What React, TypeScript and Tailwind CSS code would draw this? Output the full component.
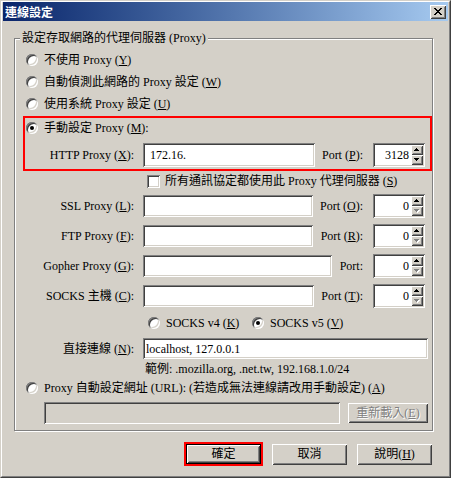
import React from "react";

const sunken =
  "shadow-[inset_1px_1px_0_#808080,inset_-1px_-1px_0_#ffffff,inset_2px_2px_0_#404040,inset_-2px_-2px_0_#d4d0c8]";
const raised =
  "shadow-[inset_1px_1px_0_#ffffff,inset_-1px_-1px_0_#404040,inset_2px_2px_0_#d4d0c8,inset_-2px_-2px_0_#808080]";

const Key = ({ k }: { k: string }) => (
  <span>
    (<u className="underline-offset-[1px]">{k}</u>)
  </span>
);

const Radio = ({ on }: { on?: boolean }) => (
  <span
    className={`w-[12px] h-[12px] shrink-0 rounded-full bg-white flex items-center justify-center ${sunken}`}
  >
    {on && <span className="w-[4px] h-[4px] rounded-full bg-black" />}
  </span>
);

// tiny pixel triangle for spin buttons
const Arrow = ({ up, off }: { up?: boolean; off?: boolean }) => {
  const rows = up
    ? [
        [2, 1],
        [1, 3],
        [0, 5],
      ]
    : [
        [0, 5],
        [1, 3],
        [2, 1],
      ];
  return (
    <svg width="6" height="4" shapeRendering="crispEdges">
      {off &&
        rows.map(([x, w], i) => (
          <rect key={"s" + i} x={x + 1} y={i + 1} width={w} height={1} fill="#ffffff" />
        ))}
      {rows.map(([x, w], i) => (
        <rect key={i} x={x} y={i} width={w} height={1} fill={off ? "#808080" : "#000000"} />
      ))}
    </svg>
  );
};

const Spin = ({ value, downOff }: { value: string; downOff?: boolean }) => (
  <div className={`w-[52px] h-[24px] bg-white flex items-stretch p-[2px] ${sunken}`}>
    <span className="flex-1 flex items-center justify-end pr-[2px]">{value}</span>
    <div className="w-[12px] flex flex-col">
      <div className={`h-[10px] bg-[#d4d0c8] flex items-center justify-center ${raised}`}>
        <Arrow up />
      </div>
      <div className={`h-[10px] bg-[#d4d0c8] flex items-center justify-center ${raised}`}>
        <Arrow off={downOff} />
      </div>
    </div>
  </div>
);

const Field = ({
  label,
  inputW,
  port,
}: {
  label: React.ReactNode;
  inputW: string;
  port: React.ReactNode;
}) => (
  <div className="flex items-center h-[24px] w-[410px]">
    <span className="w-[119px] text-right">{label}</span>
    <div className={`ml-[9px] h-[22px] bg-white ${inputW} ${sunken}`} />
    <span className="flex-1 text-right pr-[10px]">{port}</span>
    <Spin value="0" downOff />
  </div>
);

const CloseX = () => {
  const px = [
    [0, 0, 2], [6, 0, 2],
    [1, 1, 2], [5, 1, 2],
    [2, 2, 4],
    [3, 3, 2],
    [2, 4, 4],
    [1, 5, 2], [5, 5, 2],
    [0, 6, 2], [6, 6, 2],
  ];
  return (
    <svg width="8" height="7" shapeRendering="crispEdges">
      {px.map(([x, y, w], i) => (
        <rect key={i} x={x} y={y} width={w} height={1} fill="#000" />
      ))}
    </svg>
  );
};

export default function App() {
  return (
    <div className="w-[451px] h-[478px] bg-[#d4d0c8] border border-t-[#d4d0c8] border-l-[#d4d0c8] border-r-[#404040] border-b-[#404040] text-black text-[12px] leading-[14px] font-[family-name:'Liberation_Serif','Noto_Sans_CJK_TC',serif]">
      <div className="h-full border border-t-white border-l-white border-r-[#808080] border-b-[#808080] px-[1px] pb-[1px] flex flex-col">
        {/* title bar */}
        <div className="h-[19px] bg-linear-to-r from-[#0a246a] to-[#a6caf0] flex items-center justify-between pl-[2px] pr-[2px]">
          <span className="text-white font-bold text-[12px] font-[family-name:'Noto_Sans_CJK_TC',sans-serif]">
            連線設定
          </span>
          <button className={`w-[16px] h-[14px] bg-[#d4d0c8] flex items-center justify-center ${raised}`}>
            <CloseX />
          </button>
        </div>

        {/* group box */}
        <div className="relative ml-[11px] mt-[17px] w-[419px] h-[393px] border border-[#808080] shadow-[inset_1px_1px_0_#ffffff,1px_1px_0_#ffffff] pt-[10px] flex flex-col">
          <span className="absolute -top-[8px] left-[5px] px-[2px] bg-[#d4d0c8]">
            設定存取網路的代理伺服器 (Proxy)
          </span>

          <div className="flex items-center gap-[6px] h-[22px] pl-[11px]">
            <Radio />
            <span>
              不使用 Proxy <Key k="Y" />
            </span>
          </div>
          <div className="flex items-center gap-[6px] h-[22px] pl-[11px]">
            <Radio />
            <span>
              自動偵測此網路的 Proxy 設定 <Key k="W" />
            </span>
          </div>
          <div className="flex items-center gap-[6px] h-[22px] pl-[11px]">
            <Radio />
            <span>
              使用系統 Proxy 設定 <Key k="U" />
            </span>
          </div>

          {/* manual proxy, highlighted */}
          <div className="ml-[8px] mt-[1px] w-[409px] h-[55px] border-2 border-[#ff0000] pl-[1px] flex flex-col">
            <div className="flex items-center gap-[6px] h-[20px] pl-[0px]">
              <Radio on />
              <span>
                手動設定 Proxy <Key k="M" />:
              </span>
            </div>
            <div className="flex items-center h-[24px] w-[399px] mt-[5px]">
              <span className="w-[108px] text-right">
                HTTP Proxy <Key k="X" />:
              </span>
              <div className={`ml-[9px] w-[172px] h-[24px] bg-white flex items-center pl-[7px] ${sunken}`}>
                172.16.
              </div>
              <span className="flex-1 text-right pr-[10px]">
                Port <Key k="P" />:
              </span>
              <Spin value="3128" />
            </div>
          </div>

          <div className="flex items-center gap-[5px] h-[20px] pl-[132px]">
            <span className={`w-[13px] h-[13px] bg-white ${sunken}`} />
            <span>
              所有通訊協定都使用此 Proxy 代理伺服器 <Key k="S" />
            </span>
          </div>

          <div className="mt-[3px]">
            <Field
              label={
                <>
                  SSL Proxy <Key k="L" />:
                </>
              }
              inputW="w-[170px]"
              port={
                <>
                  Port <Key k="O" />:
                </>
              }
            />
          </div>
          <div className="mt-[6px]">
            <Field
              label={
                <>
                  FTP Proxy <Key k="F" />:
                </>
              }
              inputW="w-[170px]"
              port={
                <>
                  Port <Key k="R" />:
                </>
              }
            />
          </div>
          <div className="mt-[6px]">
            <Field
              label={
                <>
                  Gopher Proxy <Key k="G" />:
                </>
              }
              inputW="w-[189px]"
              port="Port:"
            />
          </div>
          <div className="mt-[6px]">
            <Field
              label={
                <>
                  SOCKS 主機 <Key k="C" />:
                </>
              }
              inputW="w-[171px]"
              port={
                <>
                  Port <Key k="T" />:
                </>
              }
            />
          </div>

          <div className="flex items-center h-[18px] mt-[6px] pl-[133px]">
            <div className="w-[104px] flex items-center gap-[6px]">
              <Radio />
              <span>
                SOCKS v4 <Key k="K" />
              </span>
            </div>
            <div className="flex items-center gap-[6px]">
              <Radio on />
              <span>
                SOCKS v5 <Key k="V" />
              </span>
            </div>
          </div>

          <div className="flex items-center h-[21px] mt-[6px]">
            <span className="w-[119px] text-right">
              直接連線 <Key k="N" />:
            </span>
            <div className={`ml-[9px] w-[285px] h-[21px] bg-white flex items-center pl-[3px] ${sunken}`}>
              localhost, 127.0.0.1
            </div>
          </div>

          <div className="flex items-center h-[18px] mt-[1px] pl-[130px]">
            範例: .mozilla.org, .net.tw, 192.168.1.0/24
          </div>

          <div className="flex items-center gap-[6px] h-[18px] mt-[1px] pl-[11px]">
            <Radio />
            <span>
              Proxy 自動設定網址 (URL): (若造成無法連線請改用手動設定) <Key k="A" />
            </span>
          </div>

          <div className="flex items-center h-[22px] mt-[5px] pl-[29px]">
            <div className={`w-[296px] h-[22px] bg-[#d4d0c8] ${sunken}`} />
            <button
              className={`ml-[8px] w-[80px] h-[20px] bg-[#d4d0c8] flex items-center justify-center text-[#808080] [text-shadow:1px_1px_0_#ffffff] ${raised}`}
            >
              重新載入 <Key k="E" />
            </button>
          </div>
        </div>

        {/* dialog buttons */}
        <div className="flex items-center mt-[11px] pl-[181px]">
          <div className="border-2 border-[#ff0000]">
            <button className="w-[75px] h-[20px] border border-black">
              <span className={`w-full h-full bg-[#d4d0c8] flex items-center justify-center ${raised}`}>
                確定
              </span>
            </button>
          </div>
          <button
            className={`ml-[9px] w-[75px] h-[21px] bg-[#d4d0c8] flex items-center justify-center ${raised}`}
          >
            取消
          </button>
          <button
            className={`ml-[10px] w-[75px] h-[21px] bg-[#d4d0c8] flex items-center justify-center ${raised}`}
          >
            說明 <Key k="H" />
          </button>
        </div>
      </div>
    </div>
  );
}
